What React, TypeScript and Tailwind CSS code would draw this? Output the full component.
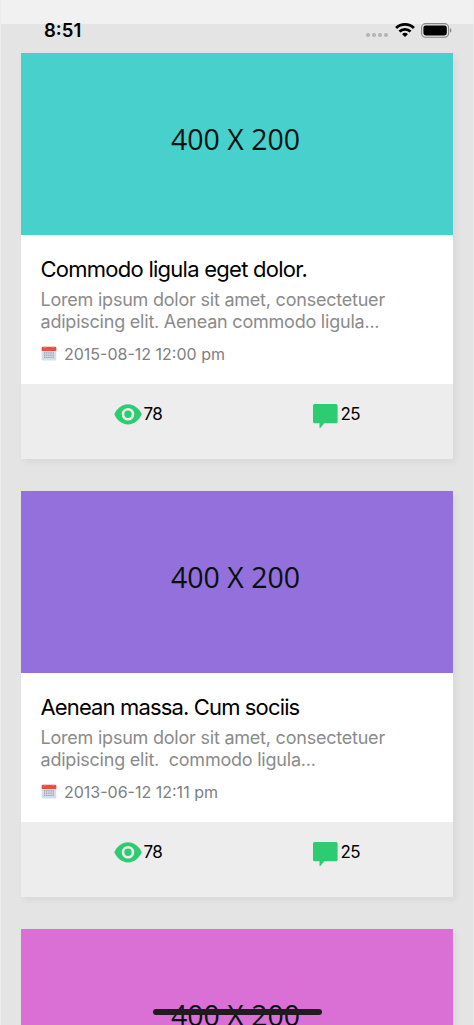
import type { ReactNode } from 'react';

interface Post {
  id: number;
  title: string;
  lines: string[];
  date: string;
  color: string;
  titleSpacing: string;
}

const posts: Post[] = [
  {
    id: 1,
    title: 'Commodo ligula eget dolor.',
    lines: ['Lorem ipsum dolor sit amet, consectetuer', 'adipiscing elit. Aenean commodo ligula...'],
    date: '2015-08-12 12:00 pm',
    color: 'bg-[#48d1cc]',
    titleSpacing: 'tracking-[-0.74px]',
  },
  {
    id: 2,
    title: 'Aenean massa. Cum sociis',
    lines: ['Lorem ipsum dolor sit amet, consectetuer', 'adipiscing elit.\u00a0 commodo ligula...'],
    date: '2013-06-12 12:11 pm',
    color: 'bg-[#9370db]',
    titleSpacing: 'tracking-[-0.86px]',
  },
  {
    id: 3,
    title: 'Aenean massa. Cum sociis',
    lines: ['Lorem ipsum dolor sit amet, consectetuer', 'adipiscing elit. Aenean commodo ligula...'],
    date: '2013-06-12 12:11 pm',
    color: 'bg-[#da70d6]',
    titleSpacing: 'tracking-[-0.86px]',
  },
];

function WifiIcon() {
  return (
    <svg width="20" height="14" viewBox="0 0 20 14" fill="none" stroke="#000" strokeWidth="2.8">
      <path d="M1.1 5a12.8 12.8 0 0 1 17.8 0" />
      <path d="M4.4 8.5a8.2 8.2 0 0 1 11.2 0" />
      <path d="M10 13.9 7.1 11.2a4.2 4.2 0 0 1 5.8 0z" fill="#000" stroke="none" />
    </svg>
  );
}

function BatteryIcon() {
  return (
    <svg width="32" height="15" viewBox="0 0 32 15">
      <rect x="0.6" y="0.6" width="27" height="13.6" rx="4" fill="none" stroke="#858585" strokeWidth="1.1" />
      <rect x="2.4" y="2.4" width="23.4" height="10" rx="2.3" fill="#000" />
      <path d="M29 5.2c1.7.5 1.7 3.9 0 4.4z" fill="#777" />
    </svg>
  );
}

function CalendarIcon() {
  return (
    <svg width="16" height="16" viewBox="0 0 16 16">
      <rect x="0.7" y="2" width="14.6" height="12.6" rx="1" fill="#d3dfe6" />
      <path d="M.7 1.8q0-1 1-1h12.6q1 0 1 1V5H.7z" fill="#e94f41" />
      <path d="M4 0v1.8M12 0v1.8" stroke="#f6b6ae" strokeWidth="1" />
      <path d="M3 6.800h10M3 9.100h10M3 11.400h10" stroke="#8fa0ac" strokeWidth="1.3" strokeDasharray="1.3 0.85" />
    </svg>
  );
}

function EyeIcon() {
  return (
    <svg width="28" height="21" viewBox="0 0 28 21">
      <path
        d="M14 .2C7.800.2 2.700 4.600.300 10.300 2.700 16 7.800 20.400 14 20.400S25.300 16 27.700 10.300C25.300 4.600 20.200.2 14 .2z"
        fill="#2ecc71"
      />
      <circle cx="14" cy="10.3" r="5" fill="none" stroke="#ededed" strokeWidth="2.6" />
    </svg>
  );
}

function CommentIcon() {
  return (
    <svg width="26" height="26" viewBox="0 0 26 26">
      <path
        d="M1.5 0h21.600q1.500 0 1.500 1.500v16.200q0 1.500-1.500 1.500H11.200L7.600 23.800q-.7.700-1.100 0V19.200h-5Q0 19.200 0 17.700V1.500Q0 0 1.500 0z"
        fill="#2ecc71"
      />
    </svg>
  );
}

function Stat({ icon, value }: { icon: ReactNode; value: string }) {
  return (
    <div className="flex items-start gap-[1.5px]">
      {icon}
      <span className="-mt-0.5 text-[17px] leading-[24px] tracking-[-0.6px] text-black">{value}</span>
    </div>
  );
}

function PostCard({ post }: { post: Post }) {
  return (
    <article className="h-[406px] w-[432px] flex-none bg-[#ededed] shadow-[3px_3px_7px_rgba(0,0,0,.055)]">
      <div className={`flex h-[182px] items-center justify-center pr-[3px] pb-[11px] ${post.color}`}>
        <span className="font-['Open_Sans','Noto_Sans',sans-serif] text-[28.5px] leading-[40px] whitespace-nowrap text-[#07110f]">
          400 X 200
        </span>
      </div>
      <div className="h-[149px] bg-white px-[19.5px] pt-[19px]">
        <h2 className={`text-[22px] leading-[30px] whitespace-nowrap text-black ${post.titleSpacing}`}>{post.title}</h2>
        <div className="mt-[5px] text-[18px] leading-[22px] tracking-[-0.22px] whitespace-nowrap text-[#8b8b8b]">
          {post.lines.map((line) => (
            <p key={line}>{line}</p>
          ))}
        </div>
        <div className="mt-[9px] flex items-center gap-[7.5px] text-[16px] leading-[24px] text-[#808080]">
          <CalendarIcon />
          <span>{post.date}</span>
        </div>
      </div>
      <div className="flex pt-5">
        <div className="w-[198px] pl-[93px]">
          <Stat icon={<EyeIcon />} value="78" />
        </div>
        <div className="pl-[94px]">
          <Stat icon={<CommentIcon />} value="25" />
        </div>
      </div>
    </article>
  );
}

export default function App() {
  return (
    <div className="relative h-[1025px] w-[474px] overflow-hidden border-x border-[#ececec] bg-[#e4e4e4] font-['Inter','Liberation_Sans',sans-serif]">
      <div className="h-6 bg-[#f1f1f1]" />
      <main className="flex flex-col gap-8 pt-[29px] pl-5">
        {posts.map((post) => (
          <PostCard key={post.id} post={post} />
        ))}
      </main>

      <header className="absolute inset-x-0 top-5 flex h-5 items-center justify-between pr-5 pl-[43px]">
        <span className="text-[18.5px] leading-5 font-semibold">8:51</span>
        <div className="flex items-center">
          <div className="mt-[9px] mr-[7px] flex gap-0.5">
            {[0, 1, 2, 3].map((dot) => (
              <i key={dot} className="size-1 rounded-full bg-[#b3b3b3]" />
            ))}
          </div>
          <WifiIcon />
          <div className="ml-1.5">
            <BatteryIcon />
          </div>
        </div>
      </header>

      <div className="absolute top-[1009px] left-[152px] h-1.5 w-[169px] rounded-full bg-[#211b20]" />
    </div>
  );
}
